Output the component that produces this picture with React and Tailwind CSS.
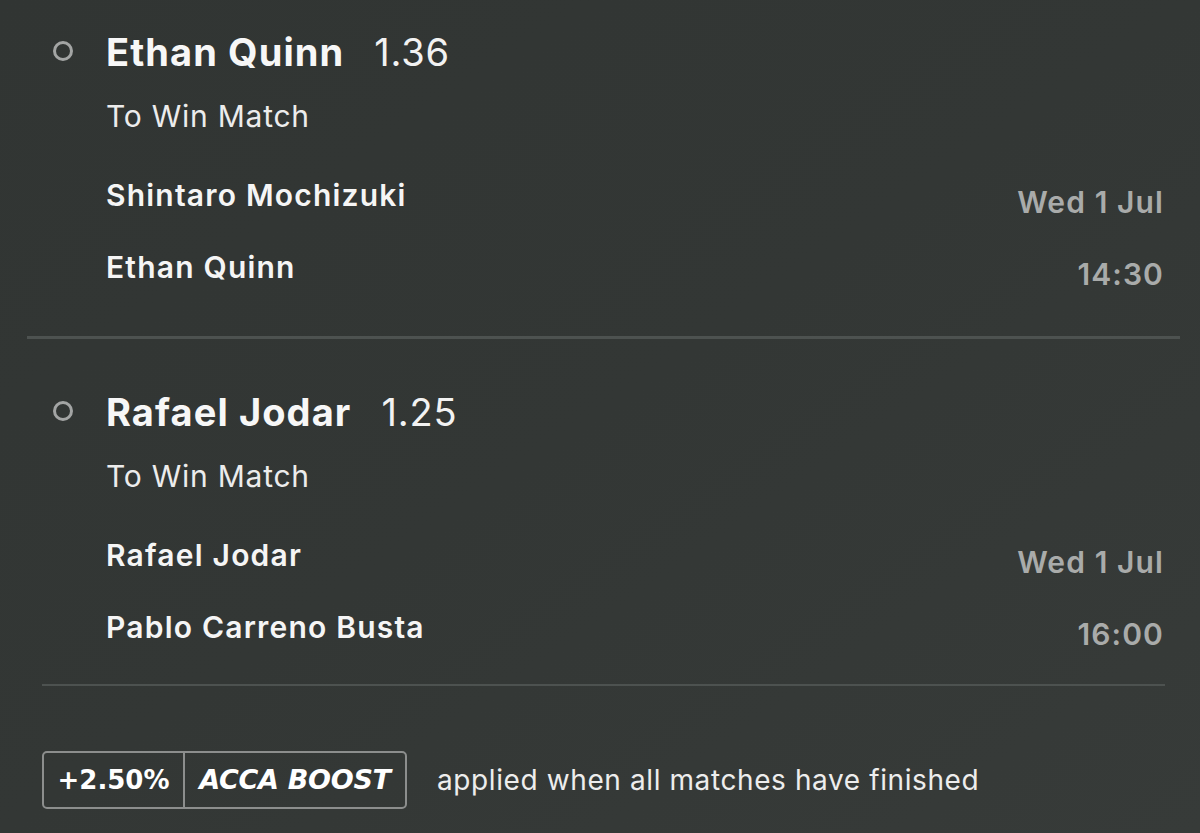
const SELECTIONS = [
  {
    pick: 'Ethan Quinn',
    odds: '1.36',
    market: 'To Win Match',
    home: 'Shintaro Mochizuki',
    away: 'Ethan Quinn',
    date: 'Wed 1 Jul',
    time: '14:30',
  },
  {
    pick: 'Rafael Jodar',
    odds: '1.25',
    market: 'To Win Match',
    home: 'Rafael Jodar',
    away: 'Pablo Carreno Busta',
    date: 'Wed 1 Jul',
    time: '16:00',
  },
];

function Selection({ sel }) {
  return (
    <div className="pl-[53px]">
      <div className="flex items-center h-[44px]">
        {/* radio marker */}
        <span className="w-[20px] h-[20px] shrink-0 rounded-full border-[3px] border-[#a3a5a4] mr-[33px] -mt-[2px]" />
        <span className="text-[38px] leading-[44px] font-bold text-[#f7f7f7] tracking-[1.1px]">{sel.pick}</span>
        <span className="text-[38px] leading-[44px] font-normal text-[#f2f2f2] tracking-[0.8px] ml-[30px]">{sel.odds}</span>
      </div>
      <div className="pl-[53px]">
        <div className="mt-[24px] text-[30px] leading-[36px] text-[#ececec] tracking-[0.75px]">{sel.market}</div>
        <div className="mt-[43px] flex justify-between">
          <div className="flex flex-col gap-[36px] text-[30px] leading-[36px] font-semibold text-[#f5f5f5] tracking-[1.2px]">
            <span>{sel.home}</span>
            <span>{sel.away}</span>
          </div>
          <div className="pt-[7px] flex flex-col items-end gap-[36px] text-[30px] leading-[36px] font-semibold text-[#a9abaa] tracking-[1.1px]">
            <span>{sel.date}</span>
            <span>{sel.time}</span>
          </div>
        </div>
      </div>
    </div>
  );
}

export default function App() {
  return (
    <div
      className="w-[1200px] h-[833px] overflow-hidden bg-gradient-to-br from-[#313533] via-[#333735] to-[#373b39] pr-[36px]"
      style={{ fontFamily: 'Inter, "Noto Sans", sans-serif' }}
    >
      <div className="pt-[30px]">
        <Selection sel={SELECTIONS[0]} />
        <div className="mt-[44px] ml-[27px] -mr-[16px] h-[3px] bg-[#4d5250]" />
        <div className="mt-[51px]">
          <Selection sel={SELECTIONS[1]} />
        </div>
        <div className="mt-[32px] ml-[42px] -mr-[1px] h-[2px] bg-[#4d5250]" />

        {/* acca boost badge */}
        <div className="mt-[65px] ml-[42px] flex items-center">
          <div className="flex h-[58px] rounded-[5px] border-2 border-[#8c8e8d]">
            <div
              className="w-[141px] flex items-center justify-center text-[26px] font-bold text-white border-r-2 border-[#8c8e8d]"
              style={{ fontFamily: '"DejaVu Sans", sans-serif' }}
            >
              +2.50%
            </div>
            <div
              className="w-[220px] flex items-center justify-center text-[27px] font-bold italic text-white tracking-[-0.3px]"
              style={{ fontFamily: '"DejaVu Sans", sans-serif' }}
            >
              ACCA BOOST
            </div>
          </div>
          <span className="ml-[30px] text-[28px] text-[#ededed] tracking-[0.6px]">applied when all matches have finished</span>
        </div>
      </div>
    </div>
  );
}
